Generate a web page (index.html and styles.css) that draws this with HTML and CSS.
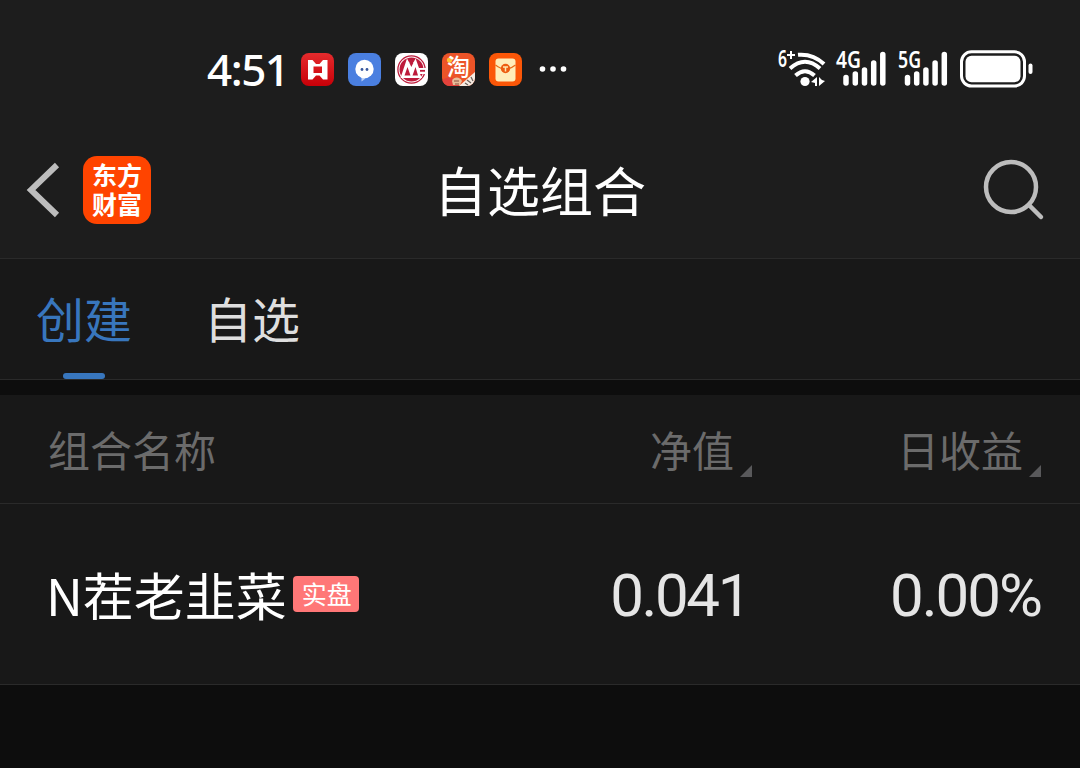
FILE: index.html
```
<!DOCTYPE html>
<html lang="zh-CN">
<head>
  <meta charset="UTF-8" />
  <meta name="viewport" content="width=device-width, initial-scale=1.0" />
  <title>自选组合</title>
  <link rel="stylesheet" href="styles.css">
</head>
<body>
  <div class="status-bar">
    <div class="status-left">
      <span class="time">4:51</span>
      <svg class="app" viewBox="0 0 33 33">
        <defs>
          <linearGradient id="red" x1="0" y1="0" x2="0" y2="1">
            <stop offset="0" stop-color="#e52b2d" />
            <stop offset="1" stop-color="#c80008" />
          </linearGradient>
        </defs>
        <rect width="33" height="33" rx="8" fill="url(#red)" />
        <path d="M7 7h4.500l3.500 4h3.500l3.500-4h4.500v19.500h-4.500l-3.500-4h-3.500l-3.500 4H7zM12.500 13.500v6.500h8.500v-6.500z" fill="#fff" fill-rule="evenodd" />
      </svg>
      <svg class="app" viewBox="0 0 33 33">
        <rect width="33" height="33" rx="8" fill="#4a7fe0" />
        <path d="M13.500 24v4.500l4-3z" fill="#b9cff6" />
        <circle cx="16.500" cy="16" r="9.200" fill="#fff" />
        <circle cx="14" cy="16.500" r="1.400" fill="#36579d" />
        <circle cx="19" cy="16.500" r="1.400" fill="#36579d" />
      </svg>
      <svg class="app" viewBox="0 0 33 33">
        <rect width="33" height="33" rx="8" fill="#fff" />
        <circle cx="16.500" cy="16.500" r="13.600" fill="none" stroke="#bd1b3b" stroke-width="1.300" />
        <circle cx="16.500" cy="16.500" r="12" fill="#bd1b3b" />
        <path d="M5.500 25 12 5.500l4.300 8 4.300-8L24 15h9v6h-8l2 4z" fill="#fff" />
        <path d="m9.500 22.500 3-8.500 3 8.500zM17.500 22.500l3-8.500 2.500 8.500zM12.500 10l3.500 6.500 4-6.500" fill="#bd1b3b" />
        <path d="m12.500 9.500 3.800 8 4-8" fill="none" stroke="#fff" stroke-width="3" />
        <path d="M25 17.800h5" stroke="#bd1b3b" stroke-width="1.800" />
      </svg>
      <svg class="app" viewBox="0 0 33 33">
        <defs>
          <clipPath id="appClip"><rect width="33" height="33" rx="8" /></clipPath>
        </defs>
        <g clip-path="url(#appClip)">
          <rect width="33" height="33" fill="#ec5428" />
          <path d="M0 28c5-6 14-4 17 5H0z" fill="#e3423c" />
          <path d="M10 28c2-5 8-4 10 0l-2 4h-7z" fill="#e8bd9a" />
          <path d="M12 28h5M13 31h4" stroke="#87513f" stroke-width="1.200" />
          <path d="M17 33 33 19v14z" fill="#f7ece3" />
          <path d="M23 30l3 2M25 27l4 3M29 24l2 4" stroke="#6d625b" stroke-width="1.300" />
          <circle cx="7.500" cy="7" r="2.600" fill="#ffc334" />
        </g>
        <text class="tao" x="5" y="22">淘</text>
      </svg>
      <svg class="app" viewBox="0 0 33 33">
        <rect width="33" height="33" rx="8" fill="#fb5708" />
        <rect x="6.500" y="5.500" width="20" height="23" rx="3" fill="#ffedb9" />
        <path d="M6.500 12q10 8 20 0" fill="none" stroke="#e96b18" stroke-width="1.300" />
        <circle cx="16.500" cy="15.500" r="4.700" fill="#ed5c10" />
        <path d="M14 14h5M16.500 14v4.500" stroke="#ffe7ae" stroke-width="1.500" />
      </svg>
      <svg class="more" viewBox="0 0 28 8">
        <circle cx="3.500" cy="4" r="2.800" />
        <circle cx="14" cy="4" r="2.800" />
        <circle cx="24.500" cy="4" r="2.800" />
      </svg>
    </div>

    <div class="status-right">
      <svg class="wifi" viewBox="0 0 50 40">
        <text class="net" x="0" y="17.500" textLength="9" lengthAdjust="spacingAndGlyphs">6</text>
        <path d="M9 6h8M13 2v8" stroke-width="2" />
        <path d="M20 5.800Q35 4.500 46 15M12 19.500Q27 6 42 19.500M17.500 26.500Q27 18 36.500 26.500" stroke-width="4" />
        <circle cx="27" cy="32.500" r="4.600" />
        <path class="solid" d="M39 28v9h-2v-3l-4-1zM41 28v9l6-5-3-1z" />
      </svg>
      <svg class="signal" viewBox="0 0 50 40">
        <text class="net" x="0" y="19" textLength="25" lengthAdjust="spacingAndGlyphs">4G</text>
        <path d="M10 28.500v5.500M19.300 25v9M28.500 21v13M37.700 14v20M46.800 5.500V34" />
      </svg>
      <svg class="signal" viewBox="0 0 50 40">
        <text class="net" x="0" y="19" textLength="23" lengthAdjust="spacingAndGlyphs">5G</text>
        <path d="M9.500 28.500v5.500M18.700 25v9M27.900 21v13M37.100 14v20M46.300 5.500V34" />
      </svg>
      <svg class="battery" viewBox="0 0 74 38">
        <rect x="1.500" y="1.800" width="63" height="34.200" rx="10" />
        <rect class="solid" x="5.500" y="5.700" width="55" height="26.500" rx="6" />
        <path d="M70.500 15.500v6.500" stroke-width="4" />
      </svg>
    </div>
  </div>

  <header class="header">
    <div class="header-left">
      <svg class="back" viewBox="0 0 34 56"><path d="M31 3 5 28 31 53" /></svg>
      <div class="brand">东方财富</div>
    </div>
    <h1>自选组合</h1>
    <svg class="search" viewBox="0 0 62 62">
      <circle cx="28" cy="28" r="25" />
      <path d="m46 46 12 12" />
    </svg>
  </header>

  <nav class="tabs">
    <a class="tab active">创建</a>
    <a class="tab">自选</a>
  </nav>

  <main class="list">
    <div class="row list-head">
      <span class="name">组合名称</span>
      <span class="value">净值<i class="sort"></i></span>
      <span class="profit">日收益<i class="sort"></i></span>
    </div>
    <div class="row item">
      <span class="name">N茬老韭菜<em class="badge">实盘</em></span>
      <span class="value">0.041</span>
      <span class="profit">0.00%</span>
    </div>
  </main>
</body>
</html>
```
FILE: styles.css
```
:root {
  --bar: #1d1d1d;
  --panel: #181818;
  --page: #0d0d0d;
  --line: #2a2a2a;
  --blue: #3876bd;
  --gray: #6b6b6b;
}

* {
  box-sizing: border-box;
  margin: 0;
  padding: 0;
}

body {
  font-family: 'Noto Sans CJK SC', sans-serif;
  background: var(--page);
  color: #fff;
  height: 768px;
  overflow: hidden;
}

.status-bar {
  display: flex;
  justify-content: space-between;
  height: 122px;
  padding: 35px 46px 19px 207px;
  background: var(--bar);
}

.status-left,
.status-right {
  display: flex;
  align-items: center;
}

.time {
  width: 94px;
  font: 500 44px/68px 'Noto Sans', sans-serif;
  letter-spacing: -1.5px;
}

.app {
  width: 33px;
  height: 33px;
  margin-right: 14px;
}

.tao {
  font: 500 23px 'Noto Sans CJK SC', sans-serif;
  fill: #fff;
}

.more {
  width: 28px;
  height: 8px;
  margin-left: 3px;
  fill: #fff;
}

svg {
  overflow: visible;
}

.status-right svg {
  fill: none;
  stroke: #fff;
  stroke-width: 5.5;
  stroke-linecap: round;
}

.status-right .net {
  font: 600 24px 'Noto Sans', sans-serif;
  fill: #fff;
  stroke: none;
}

.status-right .solid,
.wifi circle {
  fill: #fff;
  stroke: none;
}

.status-right .wifi {
  width: 50px;
  height: 40px;
  margin-right: 8px;
  stroke-linecap: butt;
}

.signal {
  width: 50px;
  height: 40px;
  margin-right: 12px;
}

.status-right .battery {
  width: 74px;
  height: 38px;
  stroke-width: 3;
}

.header {
  display: grid;
  grid-template-columns: 1fr auto 1fr;
  align-items: center;
  height: 137px;
  padding: 0 35px 0 26px;
  background: var(--bar);
  border-bottom: 1px solid var(--line);
}

.header-left {
  display: flex;
  align-items: center;
  gap: 23px;
}

.back {
  width: 34px;
  height: 56px;
  fill: none;
  stroke: #bdbdbd;
  stroke-width: 6;
}

.brand {
  width: 68px;
  height: 68px;
  padding: 4px 9px 0;
  border-radius: 14px;
  background: #ff4400;
  font-size: 25px;
  font-weight: 700;
  line-height: 29px;
}

h1 {
  margin-left: 9px;
  padding-bottom: 2px;
  font-size: 53px;
  font-weight: 400;
  line-height: 78px;
}

.search {
  justify-self: end;
  width: 62px;
  height: 62px;
  fill: none;
  stroke: #bdbdbd;
  stroke-width: 4.5;
  stroke-linecap: round;
}

.tabs {
  display: flex;
  gap: 72px;
  height: 121px;
  padding-left: 36px;
  background: var(--panel);
  border-bottom: 1px solid var(--line);
}

.tab {
  display: flex;
  flex-direction: column;
  align-items: center;
  color: #dedede;
  font-size: 48px;
  line-height: 116px;
}

.active {
  position: relative;
  color: var(--blue);
}

.active::after {
  content: '';
  position: absolute;
  bottom: 0;
  width: 42px;
  height: 6px;
  border-radius: 3px;
  background: var(--blue);
}

.list {
  margin-top: 15px;
  background: var(--panel);
}

.row {
  display: grid;
  grid-template-columns: 1fr 300px 289px;
  align-items: center;
  padding: 0 39px 0 46px;
  border-bottom: 1px solid var(--line);
}

.value,
.profit {
  display: flex;
  justify-content: flex-end;
}

.list-head {
  height: 109px;
  color: var(--gray);
  font-size: 42px;
  line-height: 106px;
}

.list-head .name {
  padding-left: 2px;
}

.sort {
  align-self: flex-end;
  width: 12px;
  height: 12px;
  margin: 0 0 25px 6px;
  background: #59595b;
  clip-path: polygon(100% 0, 100% 100%, 0 100%);
}

.item {
  height: 181px;
}

.item .name {
  display: flex;
  align-items: center;
  font-size: 51px;
  line-height: 76px;
}

.badge {
  width: 66px;
  height: 36px;
  margin-left: 6px;
  padding-left: 2px;
  border-radius: 4px;
  background: #ff7777;
  font-size: 25px;
  font-style: normal;
  line-height: 35px;
  text-align: center;
}

.item .value,
.item .profit {
  padding-top: 4px;
  color: #e5e5e5;
  font: 400 60px/76px Roboto, sans-serif;
  letter-spacing: -2px;
}

.item .value {
  padding-right: 3px;
  letter-spacing: -2.4px;
}
```
